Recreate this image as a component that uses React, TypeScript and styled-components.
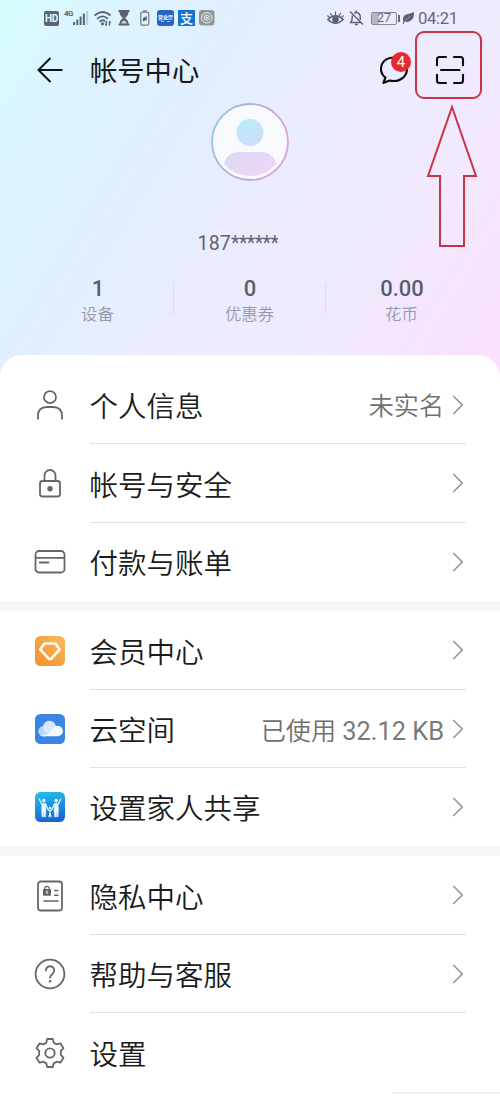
import React from 'react';
import styled, { createGlobalStyle } from 'styled-components';

const GlobalStyle = createGlobalStyle`
  * { box-sizing: border-box; }
  body {
    margin: 0;
    background: #fff;
    font-family: Roboto, 'Noto Sans CJK SC', sans-serif;
    color: #1c1c1c;
  }
  svg { display: block; flex: none; }
`;

const Screen = styled.main`
  position: relative;
  width: 500px;
  height: 1111px;
  overflow: hidden;
  background: #fff;
`;

const Hero = styled.header`
  height: 385px;
  background: linear-gradient(122deg, #d5fdff 0%, #dbf5ff 13%, #e1effe 32%, #e8edfe 46%, #eeebfd 64%, #f3e7fd 80%, #f8e3fd 92%, #fbdffb 100%);
`;

const StatusBar = styled.div`
  display: flex;
  align-items: center;
  height: 36px;
  padding: 0 43px 0 44px;
`;

const Slot = styled.span<{ $gap: number }>`
  display: flex;
  margin-left: ${(p) => p.$gap}px;
`;

const HdBadge = styled.span`
  width: 15px;
  height: 15px;
  border-radius: 2px;
  background: #5b656b;
  color: #e6f8ff;
  font: 700 10px/15px Roboto, sans-serif;
  text-align: center;
  letter-spacing: -0.4px;
`;

const NetworkLabel = styled.span`
  align-self: flex-start;
  margin: 9px 0 0 5px;
  width: 9px;
  font: 700 8px/10px 'Roboto', sans-serif;
  letter-spacing: -0.6px;
  color: #5b656b;
`;

const AppBadge = styled.span`
  display: flex;
  flex-direction: column;
  align-items: center;
  justify-content: center;
  width: 17px;
  height: 16px;
  border-radius: 3px;
  background: #2764c4;
  color: #dfeaff;
  font: 900 5px/6px 'Noto Sans CJK SC', sans-serif;
  white-space: nowrap;
  &::after {
    content: '';
    width: 9px;
    margin-top: 1px;
    border-top: 1px dashed #a9c6f2;
  }
`;

const PayBadge = styled.span`
  width: 17px;
  height: 16px;
  background: #1871d0;
  color: #fff;
  font: 500 13px/15px 'Noto Sans CJK SC', sans-serif;
  text-align: center;
`;

const Spacer = styled.span`
  flex: 1;
`;

const Battery = styled.span`
  display: flex;
  align-items: center;
  justify-content: center;
  width: 26px;
  height: 13px;
  margin-left: 7px;
  border: 1px solid #858892;
  border-radius: 2px;
  background: linear-gradient(90deg, #b5b9c5 0 30%, transparent 30%);
  color: #666a74;
  font: 400 12.5px/12px Roboto, sans-serif;
`;

const BatteryTip = styled.span`
  width: 2px;
  height: 7px;
  margin-left: 1px;
  background: #666a74;
`;

const Clock = styled.span`
  width: 39px;
  margin: 1px 0 0 3px;
  font-size: 16.6px;
  line-height: 20px;
  letter-spacing: -0.3px;
  color: #666974;
`;

const TitleBar = styled.div`
  display: flex;
  align-items: center;
  height: 67px;
  padding: 0 34px 0 36px;
`;

const Title = styled.h1`
  flex: 1;
  margin: 4px 0 0 26px;
  font-size: 27.3px;
  line-height: 40px;
  font-weight: 400;
  color: #15181d;
`;

const Messages = styled.span`
  position: relative;
  margin-right: 25px;
`;

const Count = styled.span`
  position: absolute;
  top: -3px;
  right: -2px;
  width: 20px;
  height: 20px;
  border-radius: 50%;
  background: #e8282e;
  color: #fff;
  font-size: 15px;
  line-height: 20px;
  text-align: center;
`;

const Profile = styled.div`
  display: flex;
  flex-direction: column;
  align-items: center;
  height: 174px;
`;

const Account = styled.div`
  width: 80px;
  margin: 50px 25px 0 0;
  overflow: hidden;
  white-space: nowrap;
  font-size: 19.5px;
  line-height: 26px;
  color: #5f626d;
`;

const Digits = styled.span`
  letter-spacing: 0.2px;
`;

const Stars = styled.span`
  letter-spacing: -0.5px;
`;

const Stats = styled.div`
  display: grid;
  grid-template-columns: repeat(3, 152px);
  justify-content: center;
`;

const Stat = styled.div`
  display: flex;
  flex-direction: column;
  align-items: center;
  height: 50px;
  background: linear-gradient(#dcdcf0, #dcdcf0) no-repeat right 6px / 1px 32px;
  &:last-child { background: none; }
`;

const StatValue = styled.strong`
  font-size: 22px;
  line-height: 24px;
  font-weight: 500;
  color: #5c5e69;
`;

const StatLabel = styled.span`
  margin: 2px 1px 0 0;
  font-size: 16.4px;
  line-height: 24px;
  font-weight: 350;
  color: #9698a5;
`;

const Sheet = styled.section`
  margin-top: -30px;
  padding-top: 11px;
  border-radius: 22px 22px 0 0;
  background: #fff;
`;

const Group = styled.ul`
  margin: 0;
  padding: 0;
  list-style: none;
  & + & { border-top: 10px solid #f6f6f6; }
`;

const Row = styled.li<{ $height: number }>`
  display: flex;
  align-items: stretch;
  height: ${(p) => p.$height}px;
  padding: 0 34px;
`;

const IconCell = styled.span`
  display: flex;
  align-items: center;
  width: 55.5px;
`;

const RowBody = styled.div<{ $line?: boolean }>`
  display: flex;
  flex: 1;
  align-items: center;
  border-bottom: 1px solid ${(p) => (p.$line ? '#e1e1e1' : 'transparent')};
`;

const Label = styled.span`
  flex: 1;
  padding-top: 7px;
  font-size: 28.5px;
  line-height: 40px;
  font-weight: 350;
`;

const Value = styled.span`
  padding-top: 5px;
  margin-right: 8px;
  font-size: 25.1px;
  line-height: 36px;
  font-weight: 350;
  color: #707070;
`;

const Latin = styled.span`
  font-size: 25.4px;
  font-weight: 400;
  color: #7a7a7a;
`;

const ChevronBox = styled.span`
  margin-right: 2px;
`;

const Handle = styled.div`
  width: 108px;
  height: 2px;
  margin-left: auto;
  background: #f0f0f0;
`;

const HighlightBox = styled.div`
  position: absolute;
  left: 415px;
  top: 31px;
  width: 67px;
  height: 68px;
  border: 2px solid #cb3346;
  border-radius: 9px;
`;

const PointerArrow = styled.svg`
  position: absolute;
  left: 425px;
  top: 103px;
`;

const line = { fill: 'none', stroke: '#666', strokeWidth: 1.8, strokeLinecap: 'round', strokeLinejoin: 'round' } as const;

const PersonIcon = () => (
  <svg width="32" height="32" {...line} strokeLinecap="butt">
    <circle cx="16" cy="8.2" r="6" />
    <path d="M4 30.500V27Q4 18 13 18H19Q28 18 28 27V30.500" />
  </svg>
);

const LockIcon = () => (
  <svg width="32" height="32" {...line}>
    <rect x="6" y="13" width="20" height="15.500" rx="2.500" />
    <path d="M10.500 13V7.500a5.500 5.500 0 0 1 11 0V13" />
    <circle cx="16" cy="20.800" r="2.700" fill="#666" stroke="none" />
  </svg>
);

const CardIcon = () => (
  <svg width="32" height="32" {...line}>
    <rect x="1.500" y="5" width="29" height="21.500" rx="3.500" />
    <path d="M2 11.800H30M5.800 16.500H14.500" />
  </svg>
);

const MemberIcon = () => (
  <svg width="32" height="32">
    <defs>
      <linearGradient id="gold" x1="1" y1="0" x2="0" y2="1">
        <stop offset="0" stopColor="#fbb95c" />
        <stop offset="1" stopColor="#f28f2e" />
      </linearGradient>
    </defs>
    <rect x="1" y="1" width="30" height="30" rx="5.500" fill="url(#gold)" />
    <path d="M10.500 8.500H21.500L25.700 14.500L17.500 23.400Q16 24.800 14.500 23.400L6.300 14.500Z" fill="none" stroke="#fff7e8" strokeWidth="2.700" strokeLinejoin="round" />
  </svg>
);

const CloudIcon = () => (
  <svg width="32" height="32">
    <rect x="1" y="1" width="30" height="30" rx="5.500" fill="#3885e6" />
    <circle cx="9.500" cy="18.200" r="5.200" fill="#b9d6fb" />
    <circle cx="15.500" cy="14" r="6.300" fill="#d9e9fd" />
    <path d="M6 22.500Q13 23 18 17Q20 12.500 24 12.800A5.200 5.200 0 0 1 23.500 23.200H9Q7 23.200 6 22.500Z" fill="#f4f9ff" />
  </svg>
);

const FamilyIcon = () => (
  <svg width="32" height="32" fill="none" stroke="#e9fbff" strokeLinecap="round" strokeLinejoin="round">
    <defs>
      <linearGradient id="sea" x1="0.4" y1="0" x2="0.6" y2="1">
        <stop offset="0" stopColor="#22bbe9" />
        <stop offset="1" stopColor="#195fd0" />
      </linearGradient>
    </defs>
    <rect x="1" y="1" width="30" height="30" rx="5.500" fill="url(#sea)" stroke="none" />
    <circle cx="9.800" cy="9.600" r="1.800" fill="#e9fbff" stroke="none" />
    <circle cx="22.200" cy="9.600" r="1.800" fill="#e9fbff" stroke="none" />
    <circle cx="16" cy="17" r="1.200" fill="#e9fbff" stroke="none" />
    <path d="M5.200 8L7.700 13M26.800 8L24.300 13M11.500 13L14 18.200M20.500 13L18 18.200" strokeWidth="1.200" />
    <path d="M8 12.500H11.500L12 18L11.500 26H10.300L9.800 19.500L9.300 26H8L7.500 18ZM20.500 12.500H24L24.500 18L24 26H22.700L22.200 19.500L21.700 26H20.500L20 18Z" fill="#e9fbff" strokeWidth=".4" />
    <path d="M14 18.500L16 20L18 18.500M16 20V22L14.900 26M16 22L17.100 26" strokeWidth="1.100" />
  </svg>
);

const PrivacyIcon = () => (
  <svg width="32" height="32" {...line}>
    <rect x="4" y="1.500" width="24" height="29" rx="2.800" />
    <rect x="9" y="9" width="8" height="6.800" rx=".7" fill="#666" stroke="none" />
    <path d="M10.700 9.500V8.700a2.300 2.300 0 0 1 4.600 0V9.500" strokeWidth="1.300" />
    <path d="M13 11V13.200" stroke="#fff" strokeWidth="1.200" />
    <path d="M20 10.500H24.500M20 15.200H24.500M9.500 21H24.500" strokeWidth="1.600" strokeLinecap="butt" />
  </svg>
);

const HelpIcon = () => (
  <svg width="32" height="32" {...line}>
    <circle cx="16" cy="16" r="14.400" />
    <path d="M11.800 12.500a4.200 4.200 0 1 1 6.900 3.200Q16 17.700 16 19.700" />
    <circle cx="16" cy="23.200" r="1.250" fill="#666" stroke="none" />
  </svg>
);

const GearIcon = () => (
  <svg width="32" height="32" {...line}>
    <path d="M13.200 2H18.800L19.800 5.800Q21.300 6.400 22.600 7.300L26.400 6.300L29.500 11.200L26.800 14.100Q27 16 26.800 17.900L29.500 20.800L26.400 25.700L22.600 24.700Q21.300 25.600 19.800 26.200L18.800 30H13.200L12.200 26.200Q10.700 25.600 9.400 24.700L5.600 25.700L2.500 20.800L5.200 17.900Q5 16 5.200 14.100L2.500 11.200L5.600 6.300L9.400 7.300Q10.700 6.400 12.200 5.800Z" />
    <circle cx="16" cy="16" r="4.700" />
  </svg>
);

const Chevron = () => (
  <ChevronBox>
    <svg width="12" height="20" fill="none" stroke="#979797" strokeWidth="1.700">
      <path d="M1.300 1L10.200 10L1.300 19" />
    </svg>
  </ChevronBox>
);

type Item = {
  label: string;
  icon: React.ReactNode;
  height: number;
  value?: React.ReactNode;
  plain?: boolean;
};

const groups: Item[][] = [
  [
    { label: '个人信息', icon: <PersonIcon />, height: 78, value: '未实名' },
    { label: '帐号与安全', icon: <LockIcon />, height: 79 },
    { label: '付款与账单', icon: <CardIcon />, height: 78 },
  ],
  [
    { label: '会员中心', icon: <MemberIcon />, height: 79 },
    { label: '云空间', icon: <CloudIcon />, height: 78, value: <>已使用 <Latin>32.12 KB</Latin></> },
    { label: '设置家人共享', icon: <FamilyIcon />, height: 78 },
  ],
  [
    { label: '隐私中心', icon: <PrivacyIcon />, height: 79 },
    { label: '帮助与客服', icon: <HelpIcon />, height: 78 },
    { label: '设置', icon: <GearIcon />, height: 79, plain: true },
  ],
];

const stats = [
  { value: '1', label: '设备' },
  { value: '0', label: '优惠券' },
  { value: '0.00', label: '花币' },
];

const StatusIcons = () => (
  <StatusBar>
    <HdBadge>HD</HdBadge>
    <NetworkLabel>4G</NetworkLabel>
    <Slot $gap={0}>
      <svg width="16" height="16" fill="#5b656b">
        <rect x="0" y="12" width="2" height="3" />
        <rect x="3.300" y="9.500" width="2" height="5.500" />
        <rect x="6.600" y="6.500" width="2" height="8.500" />
        <rect x="9.900" y="3.500" width="2" height="11.500" />
        <rect x="13.200" y="1" width="2" height="14" fill="#becbd1" />
      </svg>
    </Slot>
    <Slot $gap={5}>
      <svg width="18" height="16" fill="none" stroke="#5b656b" strokeWidth="1.700">
        <path d="M.5 5.500Q8.500-1.500 16.500 5.500M3 8.800Q8.500 4 14 8.800M5.500 11.800Q8.500 9 11 11.300" />
        <circle cx="8.500" cy="13.800" r="1.600" fill="#5b656b" stroke="none" />
        <path d="M12.300 11V15.500M15.500 11V15.500" strokeWidth="1.400" />
        <path d="M11 13.800L12.300 15.500M15.500 11L17 12.700" strokeWidth="1" />
      </svg>
    </Slot>
    <Slot $gap={6}>
      <svg width="12" height="16" fill="#59636a">
        <path d="M.5 0H11.500V2H10.500Q10.500 5.500 7 8Q10.500 10.500 10.500 13.800H11.500V15.500H.5V13.800H1.500Q1.500 10.500 5 8Q1.500 5.500 1.500 2H.5Z" />
        <path d="M3 13.500Q4 11 6 10.500Q8 11 9 13.500Z" fill="#c7d7df" />
      </svg>
    </Slot>
    <Slot $gap={10}>
      <svg width="10" height="16" fill="none" stroke="#707a82" strokeWidth="1.200">
        <rect x=".8" y="2.200" width="8" height="13" rx="1.500" />
        <path d="M3 1H6.600" strokeWidth="1.500" />
        <path d="M2.800 11.500L3 8L6.800 6V10L4 11Z" fill="#59636a" stroke="none" />
      </svg>
    </Slot>
    <Slot $gap={7}>
      <AppBadge>营业厅</AppBadge>
    </Slot>
    <Slot $gap={4}>
      <PayBadge>支</PayBadge>
    </Slot>
    <Slot $gap={4}>
      <svg width="16" height="16" fill="none" stroke="#eee">
        <rect width="15.500" height="15.500" rx="3" fill="#92979c" stroke="none" />
        <circle cx="7.800" cy="7.800" r="5.200" />
        <circle cx="7.800" cy="7.800" r="2.500" />
        <circle cx="7.800" cy="7.800" r=".8" fill="#eee" />
      </svg>
    </Slot>
    <Spacer />
    <svg width="17" height="16" fill="none" stroke="#5c606a" strokeWidth="1.400">
      <path d="M.8 9.500Q8.500 1.800 16.200 9.500Q8.500 17.200 .8 9.500Z" />
      <circle cx="8.500" cy="9.500" r="2.600" fill="#5c606a" />
      <path d="M8.500 1.500V5M3.200 3L5 6M13.800 3L12 6M.5 5.500L2.500 7.500M16.500 5.500L14.500 7.500" strokeWidth="1.200" />
    </svg>
    <Slot $gap={5}>
      <svg width="15" height="16" fill="none" stroke="#5c606a" strokeWidth="1.400">
        <path d="M5.200 3.300Q7 1.700 9 3Q11.300 4 11.300 7.500V10M3.500 5.500Q3 8 3 10L1.500 12.500H11.500M5.800 14.500H8.800M7.300 .5V2.500M1 1.500L14 14.500" />
      </svg>
    </Slot>
    <Battery>27</Battery>
    <BatteryTip />
    <Slot $gap={2}>
      <svg width="13" height="14" fill="#5c606a">
        <path d="M1 10Q0 4 6 3Q9 2.500 12 1Q12.500 6 9.500 9Q6.500 11.800 3 10.500L1.500 13H.5L2 9.800Z" />
        <path d="M3 9.500L8 5.500" stroke="#d7d9e8" strokeWidth=".5" />
      </svg>
    </Slot>
    <Clock>04:21</Clock>
  </StatusBar>
);

const Avatar = () => (
  <svg width="78" height="78">
    <defs>
      <linearGradient id="ring" x1="0" y1=".3" x2="1" y2=".6">
        <stop offset="0" stopColor="#91c5db" />
        <stop offset=".5" stopColor="#b5afd3" />
        <stop offset="1" stopColor="#df9ed8" />
      </linearGradient>
      <linearGradient id="head" x1=".2" y1="0" x2=".8" y2="1">
        <stop offset="0" stopColor="#b8edf8" />
        <stop offset="1" stopColor="#cddcf8" />
      </linearGradient>
      <linearGradient id="shoulders" x1="0" y1="0" x2="1" y2="1">
        <stop offset="0" stopColor="#d9daf5" />
        <stop offset="1" stopColor="#f1d5f6" />
      </linearGradient>
    </defs>
    <circle cx="39" cy="39" r="38" fill="#f8fafe" stroke="url(#ring)" strokeWidth="1.800" />
    <circle cx="39" cy="29.500" r="13.500" fill="url(#head)" />
    <path d="M13 61Q16 49 28 49H50Q62 49 65 61Q55 73 39 73Q23 73 13 61Z" fill="url(#shoulders)" />
  </svg>
);

export default function App() {
  return (
    <>
      <GlobalStyle />
      <Screen>
        <Hero>
          <StatusIcons />
          <TitleBar>
            <svg width="28" height="28" fill="none" stroke="#101419" strokeWidth="2">
              <path d="M26.500 14H2.500M14.500 2L2.500 14L14.500 26" />
            </svg>
            <Title>帐号中心</Title>
            <Messages>
              <svg width="30" height="30" fill="none" stroke="#0b0c10" strokeWidth="2.100" strokeLinejoin="round">
                <path d="M15 2.500C7 2.500 2 7.500 2 14Q2 19.500 6.500 22.500L4.300 28L10.500 25.500Q12 26 15 26C22 26 28 21 28 14C28 7 22 2.500 15 2.500Z" />
              </svg>
              <Count>4</Count>
            </Messages>
            <svg width="32" height="32" fill="none" stroke="#0b0c10" strokeWidth="2.100" strokeLinecap="round">
              <path d="M3 11.300V5.500Q3 3 5.500 3H12M20 3H26.500Q29 3 29 5.500V11.300M29 20.700V26.500Q29 29 26.500 29H20M12 29H5.500Q3 29 3 26.500V20.700M7 16H25.500" />
            </svg>
          </TitleBar>
          <Profile>
            <Avatar />
            <Account><Digits>187</Digits><Stars>******</Stars></Account>
          </Profile>
          <Stats>
            {stats.map((s) => (
              <Stat key={s.label}>
                <StatValue>{s.value}</StatValue>
                <StatLabel>{s.label}</StatLabel>
              </Stat>
            ))}
          </Stats>
        </Hero>
        <Sheet>
          {groups.map((items, g) => (
            <Group key={g}>
              {items.map((item, i) => (
                <Row key={item.label} $height={item.height}>
                  <IconCell>{item.icon}</IconCell>
                  <RowBody $line={i < items.length - 1}>
                    <Label>{item.label}</Label>
                    {item.value && <Value>{item.value}</Value>}
                    {!item.plain && <Chevron />}
                  </RowBody>
                </Row>
              ))}
            </Group>
          ))}
          <Handle />
        </Sheet>
        <HighlightBox />
        <PointerArrow width="54" height="146" fill="none" stroke="#c73445" strokeWidth="2">
          <path d="M27 4L51 73H39V143H15V73H3Z" />
        </PointerArrow>
      </Screen>
    </>
  );
}
